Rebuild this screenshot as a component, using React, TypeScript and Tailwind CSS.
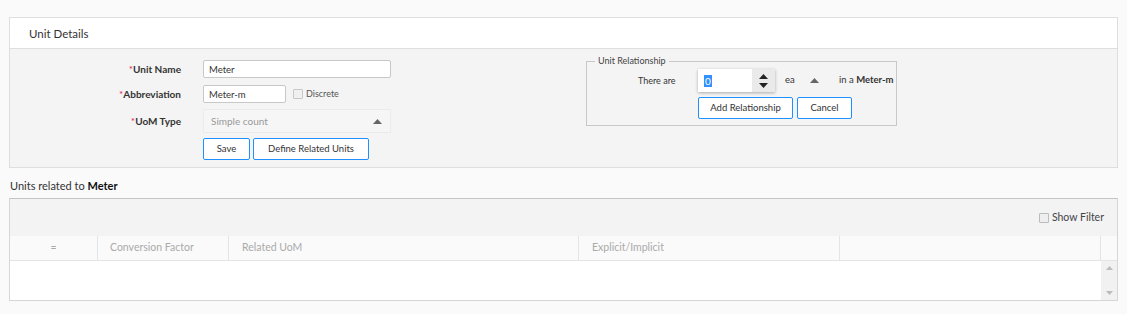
const font = { fontFamily: 'Lato, "Open Sans", sans-serif' };

const Label = ({ text }: { text: string }) => (
    <div className="w-[193px] pr-[22px] text-right text-[10px] font-bold text-[#333]">
        <span className="text-[#e0245e] font-normal">*</span>
        {text}
    </div>
);

const Btn = ({ children, w }: { children: React.ReactNode; w: string }) => (
    <button className={`${w} h-[22px] rounded-[2px] border border-[#1e90ff] bg-white text-[9.5px] text-[#333]`}>
        {children}
    </button>
);

const Caret = () => (
    <svg width="9" height="5" viewBox="0 0 9 5">
        <path d="M0 5 L4.5 0 L9 5 Z" fill="#666" />
    </svg>
);

export default function App() {
    return (
        <div className="w-[1127px] h-[314px] bg-[#fafafa] pt-[17px] text-[#333]" style={font}>
            {/* Unit Details card */}
            <div className="mx-[9px] w-[1109px] border border-[#dedede]">
                <div className="h-[31px] bg-white border-b border-[#dedede] flex items-center pl-[19px] pt-[1px] text-[11.5px] text-[#333]">
                    Unit Details
                </div>
                <div className="bg-[#f4f4f4] h-[118px] flex">
                    {/* form */}
                    <div className="flex flex-col pt-[11px] w-[576px]">
                        <div className="flex items-center h-[18px]">
                            <Label text="Unit Name" />
                            <input
                                readOnly
                                value="Meter"
                                className="w-[188px] h-[18px] border border-[#c8c8c8] rounded-[2px] bg-white px-[5px] text-[9.5px] outline-none"
                            />
                        </div>
                        <div className="flex items-center h-[18px] mt-[7px]">
                            <Label text="Abbreviation" />
                            <input
                                readOnly
                                value="Meter-m"
                                className="w-[83px] h-[18px] border border-[#c8c8c8] rounded-[2px] bg-white px-[5px] text-[9.5px] outline-none"
                            />
                            <span className="ml-[7px] w-[10px] h-[10px] border border-[#c8c8c8] bg-[#f0f0f0] rounded-[1px]" />
                            <span className="ml-[3px] text-[9px] text-[#555]">Discrete</span>
                        </div>
                        <div className="flex items-center h-[24px] mt-[6px]">
                            <Label text="UoM Type" />
                            <div className="w-[188px] h-[24px] border border-[#ebebeb] bg-[#f6f6f6] flex items-center justify-between pl-[7px] pr-[8px] text-[10px] text-[#999]">
                                <span>Simple count</span>
                                <Caret />
                            </div>
                        </div>
                        <div className="flex mt-[5px] pl-[193px] gap-[3px]">
                            <Btn w="w-[47px]">Save</Btn>
                            <Btn w="w-[116px]">Define Related Units</Btn>
                        </div>
                    </div>

                    {/* Unit Relationship box */}
                    <div className="pt-[12px]">
                        <div className="relative w-[311px] h-[65px] border border-[#c8c8c8]">
                            <span className="absolute left-[8px] top-[-7px] bg-[#f4f4f4] px-[3px] text-[9px] leading-[12px] text-[#444]">
                                Unit Relationship
                            </span>
                            <div className="flex items-center h-[23px] mt-[7px]">
                                <span className="w-[111px] pl-[51px] text-[9px]">There are</span>
                                <div className="w-[77px] h-[23px] bg-white shadow-[0_1px_3px_rgba(0,0,0,0.3)] flex">
                                    <div className="flex-1 flex items-center pl-[6px] text-[10px]">
                                        <span className="bg-[#3390ff] text-white px-[1px] leading-[12px]">0</span>
                                    </div>
                                    <div className="w-[23px] bg-[#eaeaea] flex flex-col items-center justify-center">
                                        <svg width="9" height="14" viewBox="0 0 9 14">
                                            <path d="M0 5 L4.5 0 L9 5 Z M0 9 L4.5 14 L9 9 Z" fill="#222" />
                                        </svg>
                                    </div>
                                </div>
                                <div className="w-[53px] h-[23px] ml-[1px] flex items-center justify-between pl-[9px] pr-[10px] text-[9.5px]">
                                    <span>ea</span>
                                    <Caret />
                                </div>
                                <span className="ml-[10px] text-[9.5px] whitespace-nowrap">
                                    in a <b>Meter-m</b>
                                </span>
                            </div>
                            <div className="flex gap-[4px] mt-[5px] pl-[111px]">
                                <Btn w="w-[95px]">Add Relationship</Btn>
                                <Btn w="w-[55px]">Cancel</Btn>
                            </div>
                        </div>
                    </div>
                </div>
            </div>

            {/* Units related */}
            <div className="pl-[10px] mt-[10px] text-[11px] h-[20px] leading-[16px]">
                Units related to <b className="text-[#111]">Meter</b>
            </div>
            <div className="mx-[9px] w-[1109px] border border-[#d6d6d6] border-t-[#c4c4c4]">
                <div className="h-[37px] bg-[#f3f3f4] flex items-center justify-end pr-[13px]">
                    <span className="w-[10px] h-[10px] border border-[#bcbcbc] bg-[#eee] rounded-[1px]" />
                    <span className="ml-[3px] text-[10.5px] text-[#444]">Show Filter</span>
                </div>
                <div className="flex h-[25px] bg-[#fafafa] border-b border-[#e4e4e4] text-[10.5px] text-[#aaa]">
                    <div className="w-[88px] border-r border-[#e4e4e4] flex items-center justify-center">=</div>
                    <div className="w-[131px] border-r border-[#e4e4e4] flex items-center pl-[12px]">Conversion Factor</div>
                    <div className="w-[350px] border-r border-[#e4e4e4] flex items-center pl-[13px]">Related UoM</div>
                    <div className="w-[261px] border-r border-[#e4e4e4] flex items-center pl-[13px]">Explicit/Implicit</div>
                    <div className="w-[261px] border-r border-[#e4e4e4]" />
                    <div className="flex-1" />
                </div>
                <div className="flex h-[39px] bg-white">
                    <div className="flex-1" />
                    <div className="w-[16px] bg-[#f1f1f1] flex flex-col items-center justify-between py-[5px]">
                        <svg width="7" height="4" viewBox="0 0 7 4"><path d="M0 4 L3.5 0 L7 4 Z" fill="#bbb" /></svg>
                        <svg width="7" height="4" viewBox="0 0 7 4"><path d="M0 0 L3.5 4 L7 0 Z" fill="#bbb" /></svg>
                    </div>
                </div>
            </div>
        </div>
    );
}
